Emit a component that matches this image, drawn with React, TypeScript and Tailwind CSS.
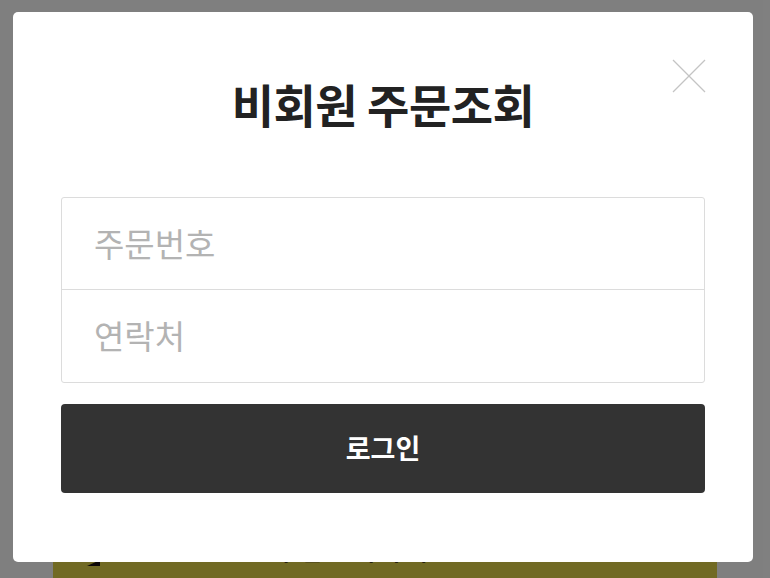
const font = { fontFamily: '"Noto Sans CJK KR", "Noto Sans", sans-serif' };

function CloseIcon() {
  return (
    <svg width="34" height="34" viewBox="0 0 34 34" fill="none" stroke="#c4c4c4" strokeWidth="1.2">
      <line x1="1" y1="1" x2="33" y2="33" />
      <line x1="33" y1="1" x2="1" y2="33" />
    </svg>
  );
}

export default function App() {
  return (
    <div className="relative w-[770px] h-[578px] overflow-hidden bg-white" style={font}>
      {/* page behind the dimmed overlay */}
      <div className="flex h-full flex-col justify-end">
        <div className="mx-[53px] flex h-[40px] items-start gap-[176px] bg-[#e2d548] px-[34px] pt-[1px]">
          <div className="mt-[21px] h-0 w-0 border-b-[6px] border-l-[13px] border-b-[#1a1010] border-l-transparent" />
          <span className="text-[22px] font-bold leading-none text-[#1a1010] tracking-[6px]">주문조회하기</span>
        </div>
      </div>

      {/* overlay */}
      <div className="absolute inset-0 bg-black/50" />

      {/* modal */}
      <div className="absolute left-[13px] top-[12px] w-[740px] h-[550px] rounded-[5px] bg-white px-[48px] pt-[68px]">
        <button className="absolute right-[47px] top-[47px]">
          <CloseIcon />
        </button>
        <h2 className="text-center text-[46px] font-bold leading-none text-[#222] tracking-[-0.5px]">비회원 주문조회</h2>

        <div className="mt-[71px] flex flex-col rounded-[3px] border border-[#dcdcdc]">
          <div className="flex h-[92px] items-center border-b border-[#dcdcdc] px-[32px]">
            <span className="text-[33px] font-normal text-[#b3b3b3]">주문번호</span>
          </div>
          <div className="flex h-[92px] items-center px-[32px]">
            <span className="text-[33px] font-normal text-[#b3b3b3]">연락처</span>
          </div>
        </div>

        <button className="mt-[21px] flex h-[89px] w-full items-center justify-center rounded-[4px] bg-[#333333] text-[27px] font-bold text-white">
          로그인
        </button>
      </div>
    </div>
  );
}
